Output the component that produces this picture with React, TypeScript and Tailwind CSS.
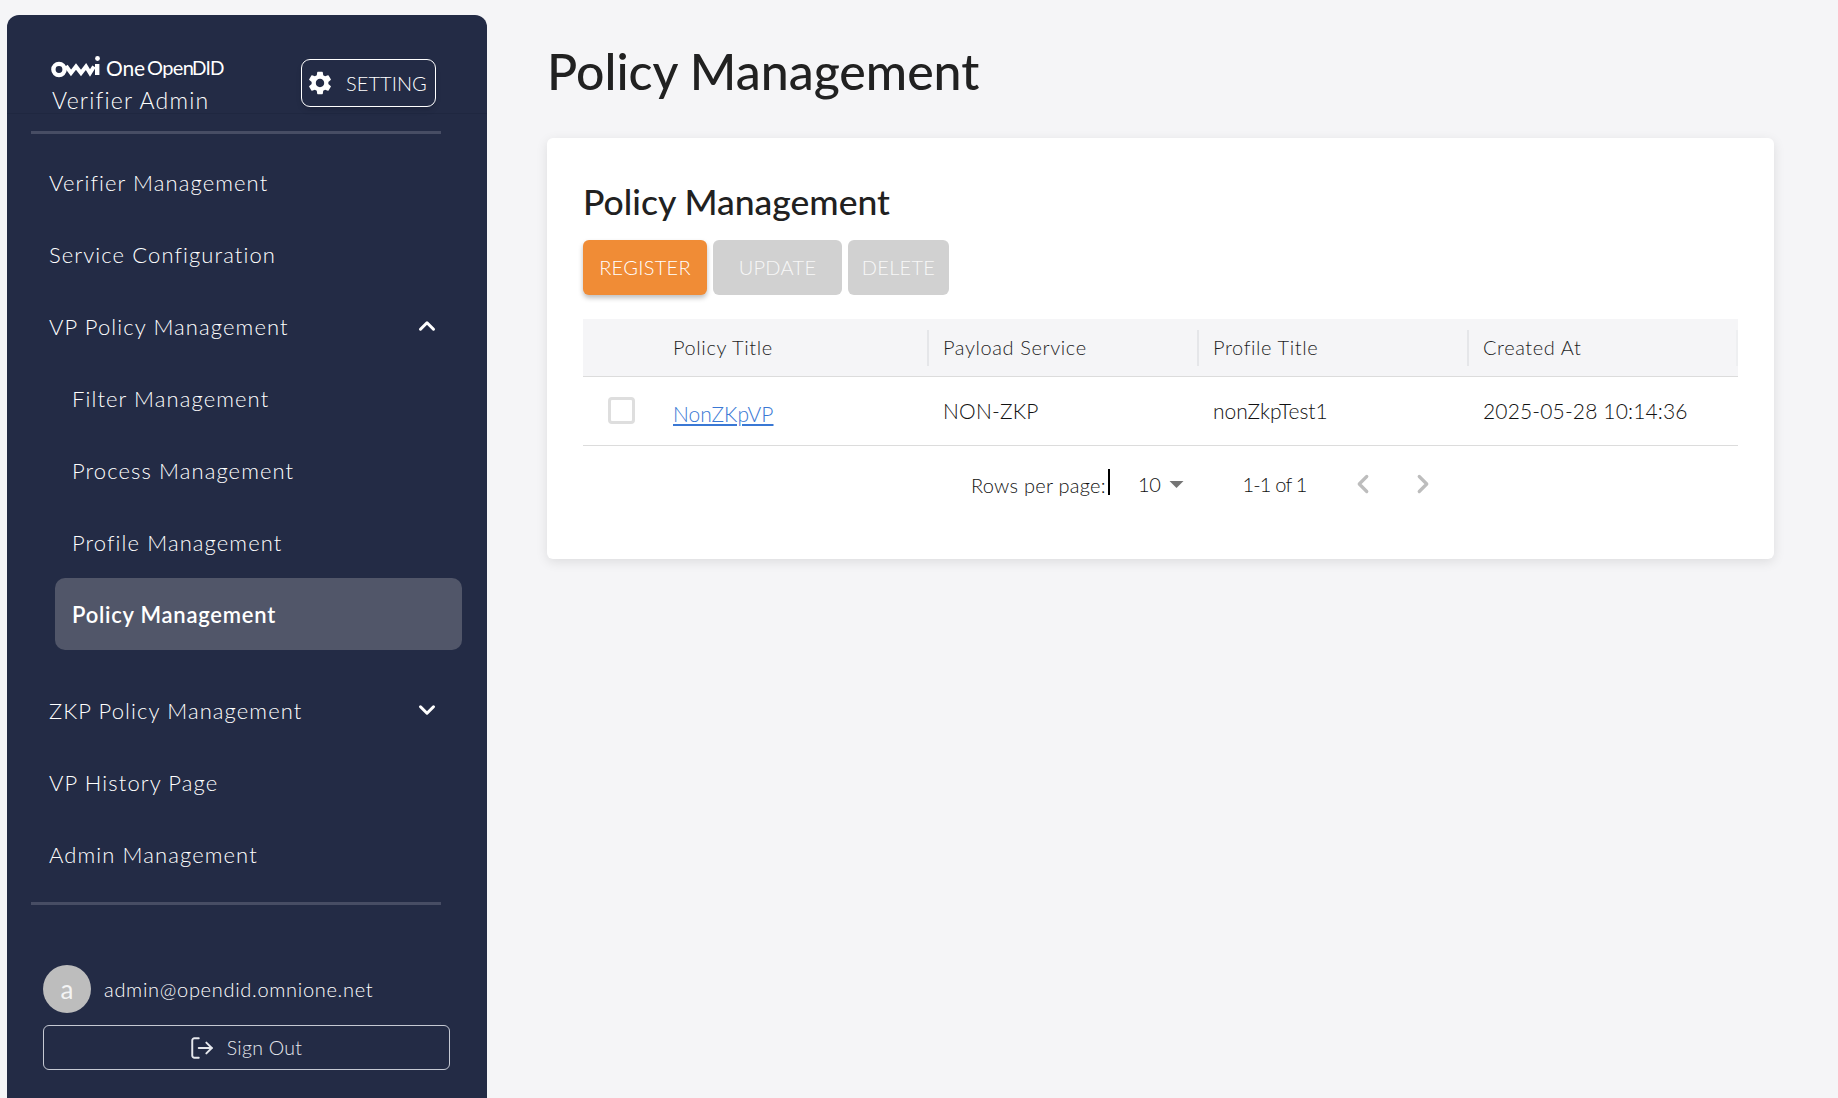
import { ChevronUp, ChevronDown, ChevronLeft, ChevronRight, LogOut } from "lucide-react";
import { MdSettings } from "react-icons/md";

const font = "font-['Lato','Liberation_Sans',sans-serif]";

function NavItem({ label, sub, active, chevron }: { label: string; sub?: boolean; active?: boolean; chevron?: "up" | "down" }) {
  return (
    <div
      className={`flex h-[72px] items-center rounded-[10px] text-[22px] ${
        sub ? "ml-[48px] mr-[25px] pl-[17px]" : "ml-[42px] mr-[47px]"
      } ${active ? "bg-[#515669] font-semibold tracking-[0.75px] text-white" : "font-light tracking-[1.1px] text-white"}`}
    >
      <span className="flex-1">{label}</span>
      {chevron === "up" && <ChevronUp className="h-[26px] w-[26px]" strokeWidth={2.8} />}
      {chevron === "down" && <ChevronDown className="h-[26px] w-[26px]" strokeWidth={2.8} />}
    </div>
  );
}

function Logo() {
  return (
    <div className="flex h-[26px] items-center">
      <svg width="50" height="24" viewBox="0 0 50 24" className="text-white">
        <circle cx="8" cy="14.5" r="5.6" fill="none" stroke="currentColor" strokeWidth="4.4" />
        <path d="M15 11 L20 18 L25 11.5 L30 18 L35 11.5 L39 18 L43 11.5" fill="none" stroke="currentColor" strokeWidth="4" />
        <rect x="44" y="9" width="4.4" height="11" fill="currentColor" />
        <circle cx="46.5" cy="3.5" r="2.4" fill="currentColor" />
      </svg>
      <span className="ml-[5px] w-[41px] text-[21px] leading-none tracking-[-0.2px] text-white">One</span>
      <span className="w-[45px] text-[20px] leading-none tracking-[-0.6px] text-white">Open</span>
      <span className="text-[19px] leading-none tracking-[-0.9px] text-white">DID</span>
    </div>
  );
}

function Sidebar() {
  return (
    <aside className="ml-[7px] mt-[15px] flex h-[1083px] w-[480px] shrink-0 flex-col rounded-t-[12px] bg-[#232b45]">
      <div className="flex h-[99px] items-start justify-between border-b border-[#1f2740] pl-[44px] pr-[51px] pt-[40px]">
        <div className="-mt-[1px]">
          <Logo />
          <div className="ml-[1px] mt-[6px] text-[23px] font-light leading-[28px] tracking-[1.2px] text-white">Verifier Admin</div>
        </div>
        <div className="mt-[4px] flex h-[48px] w-[135px] items-center rounded-[9px] border border-white pl-[4px] shadow-md">
          <MdSettings className="h-[28px] w-[28px] text-white" />
          <span className="ml-[12px] text-[20px] font-light tracking-[0.05px] text-white">SETTING</span>
        </div>
      </div>
      <div className="ml-[24px] mr-[46px] mt-[17px] h-[3px] bg-[#474d64]" />
      <nav className="mt-[12px]">
        <NavItem label="Verifier Management" />
        <NavItem label="Service Configuration" />
        <NavItem label="VP Policy Management" chevron="up" />
        <NavItem label="Filter Management" sub />
        <NavItem label="Process Management" sub />
        <NavItem label="Profile Management" sub />
        <NavItem label="Policy Management" sub active />
        <div className="mt-[24px]">
          <NavItem label="ZKP Policy Management" chevron="down" />
        </div>
        <NavItem label="VP History Page" />
        <NavItem label="Admin Management" />
      </nav>
      <div className="ml-[24px] mr-[46px] mt-[12px] h-[3px] bg-[#474d64]" />
      <div className="ml-[36px] mr-[37px] mt-[60px]">
        <div className="flex items-center gap-[13px]">
          <div className="flex h-[48px] w-[48px] items-center justify-center rounded-full bg-[#bdbdbd] text-[26px] text-[#f4f4f4]">a</div>
          <span className="text-[20px] font-light tracking-[0.7px] text-white">admin@opendid.omnione.net</span>
        </div>
        <div className="mt-[12px] flex h-[45px] items-center justify-center gap-[12px] rounded-[6px] border border-[#c5c9d3] text-[19.5px] font-light tracking-[0.3px] text-[#e6e8ed]">
          <LogOut className="-ml-[2px] h-[26px] w-[26px]" strokeWidth={1.8} />
          <span>Sign Out</span>
        </div>
      </div>
    </aside>
  );
}

function HeaderCell({ label, w, last }: { label: string; w: string; last?: boolean }) {
  return (
    <div className={`flex h-[36px] items-center border-r-2 pb-[2px] text-[20px] font-light tracking-[0.6px] text-[#1f1f1f] ${last ? "border-[#eeeff1]" : "border-[#e5e6e9]"} ${w}`}>
      {label}
    </div>
  );
}

function Table() {
  return (
    <div className="mt-[24px]">
      <div className="flex h-[58px] items-center border-b border-[#dcdcdc] bg-[#f5f5f7]">
        <div className="w-[90px]" />
        <HeaderCell label="Policy Title" w="w-[256px]" />
        <div className="w-[14px]" />
        <HeaderCell label="Payload Service" w="w-[256px]" />
        <div className="w-[14px]" />
        <HeaderCell label="Profile Title" w="w-[256px]" />
        <div className="w-[14px]" />
        <HeaderCell label="Created At" w="w-[255px]" last />
      </div>
      <div className="flex h-[69px] items-center border-b border-[#dcdcdc] text-[21px] tracking-[0.25px] text-[#111]">
        <div className="w-[75px] pl-[25px]">
          <div className="-mt-[2px] h-[27px] w-[27px] rounded-[4px] border-[3px] border-[#dedede]" />
        </div>
        <div className="w-[271px] pl-[15px] pt-[5px]">
          <a className="font-light tracking-[0px] text-[#3a78d4] underline underline-offset-[2px]">NonZKpVP</a>
        </div>
        <div className="w-[270px] pl-[14px] font-light">NON-ZKP</div>
        <div className="w-[270px] pl-[14px] font-light tracking-[0px]">nonZkpTest1</div>
        <div className="w-[269px] pl-[14px] font-light tracking-[0.15px]">2025-05-28 10:14:36</div>
      </div>
      <div className="flex h-[76px] items-center pl-[388px] text-[20px] font-light tracking-[0.25px] text-[#111]">
        <div className="relative w-[139px] pt-[2px]">
          Rows per page:
          <span className="absolute right-0 top-[1px] h-[26px] w-[2px] bg-black" />
        </div>
        <span className="ml-[28px] tracking-[-0.4px]">10</span>
        <svg width="15" height="7" viewBox="0 0 16 8" className="ml-[9px]"><path d="M0 0h16l-8 8z" fill="#757575" /></svg>
        <span className="ml-[58px] w-[61px] whitespace-nowrap tracking-[-0.8px]">1-1 of 1</span>
        <ChevronLeft className="ml-[45px] h-[30px] w-[30px] text-[#bdbdbd]" strokeWidth={2.6} />
        <ChevronRight className="ml-[30px] h-[30px] w-[30px] text-[#bdbdbd]" strokeWidth={2.6} />
      </div>
    </div>
  );
}

export default function App() {
  return (
    <div className={`${font} flex h-[1098px] overflow-hidden bg-[#f5f5f7]`}>
      <Sidebar />
      <main className="w-[1288px] pl-[60px]">
        <h1 className="mt-[35px] h-[72px] text-[50px] font-medium leading-[72px] text-[#212121]">Policy Management</h1>
        <section className="mt-[31px] h-[421px] w-[1227px] rounded-[6px] bg-white px-[36px] pt-[40px] shadow-[0_3px_12px_rgba(0,0,0,0.1)]">
          <h2 className="h-[48px] text-[35.5px] font-medium leading-[48px] text-[#212121]">Policy Management</h2>
          <div className="mt-[14px] flex gap-[6px] text-[20px] font-light tracking-[0.3px]">
            <div className="flex h-[55px] w-[124px] items-center justify-center rounded-[6px] bg-[#f08c36] pb-[2px] text-white shadow-[0_3px_5px_rgba(0,0,0,0.25)]">REGISTER</div>
            <div className="flex h-[55px] w-[129px] items-center justify-center rounded-[6px] bg-[#d1d1d1] pb-[2px] text-[#f8f8f8]">UPDATE</div>
            <div className="flex h-[55px] w-[101px] items-center justify-center rounded-[6px] bg-[#d1d1d1] pb-[2px] text-[#f8f8f8]">DELETE</div>
          </div>
          <Table />
        </section>
      </main>
    </div>
  );
}
